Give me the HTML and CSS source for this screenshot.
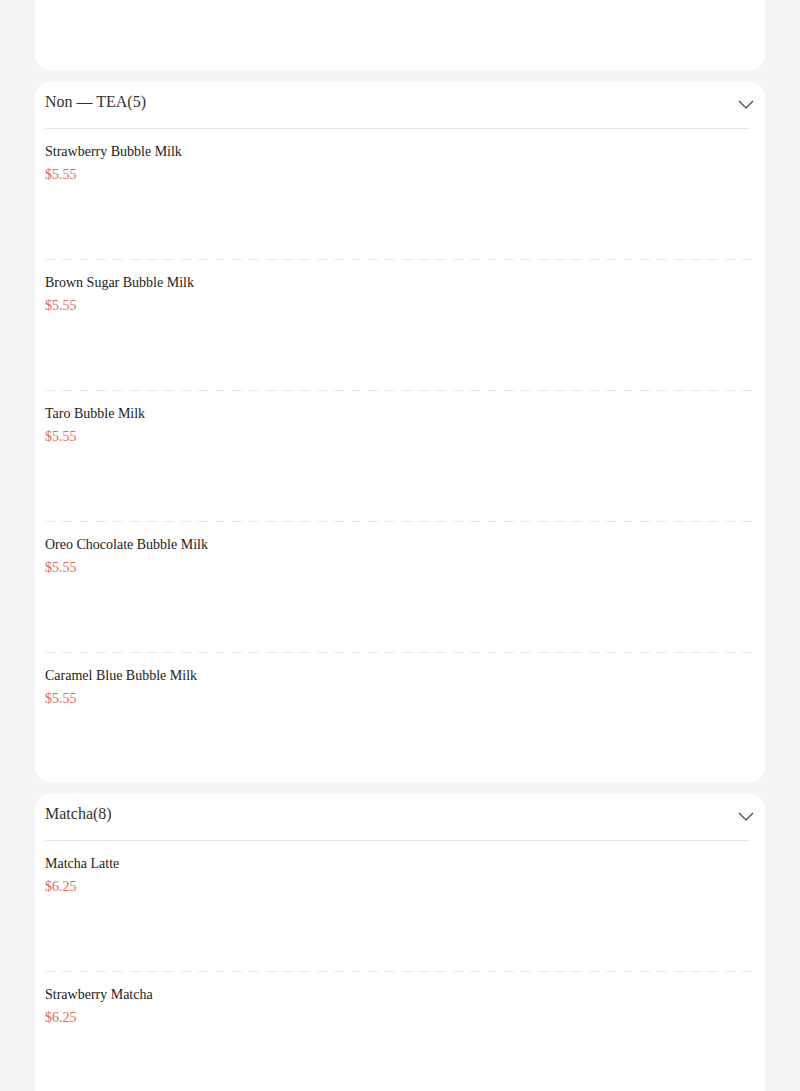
FILE: index.html
```html
<!DOCTYPE html>
<html>
<head>
<meta charset="utf-8">
<link rel="stylesheet" href="styles.css">
</head>
<body>
<div class="menu">
  <section class="card card-partial"></section>

  <section class="card">
    <div class="head">
      <span class="title">Non — TEA(5)</span>
      <svg class="chev" width="16" height="9" viewBox="0 0 16 9"><polyline points="1,1 8,8 15,1" fill="none" stroke="#444" stroke-width="1.2"/></svg>
    </div>
    <div class="item"><div class="name">Strawberry Bubble Milk</div><div class="price">$5.55</div></div>
    <div class="item"><div class="name">Brown Sugar Bubble Milk</div><div class="price">$5.55</div></div>
    <div class="item"><div class="name">Taro Bubble Milk</div><div class="price">$5.55</div></div>
    <div class="item"><div class="name">Oreo Chocolate Bubble Milk</div><div class="price">$5.55</div></div>
    <div class="item"><div class="name">Caramel Blue Bubble Milk</div><div class="price">$5.55</div></div>
  </section>

  <section class="card">
    <div class="head">
      <span class="title">Matcha(8)</span>
      <svg class="chev" width="16" height="9" viewBox="0 0 16 9"><polyline points="1,1 8,8 15,1" fill="none" stroke="#444" stroke-width="1.2"/></svg>
    </div>
    <div class="item"><div class="name">Matcha Latte</div><div class="price">$6.25</div></div>
    <div class="item"><div class="name">Strawberry Matcha</div><div class="price">$6.25</div></div>
  </section>
</div>
</body>
</html>
```
FILE: styles.css
```css
html, body {
  margin: 0;
  padding: 0;
  background: #f5f5f7;
  font-family: "Liberation Serif", "Times New Roman", serif;
  overflow: hidden;
  height: 1091px;
}
.menu {
  display: flex;
  flex-direction: column;
  gap: 10px;
  padding: 0 35px;
}
.card {
  background: #fff;
  border-radius: 16px;
  padding-left: 10px;
  overflow: hidden;
}
.card-partial {
  height: 71px;
  border-radius: 0 0 16px 16px;
}
.head {
  display: flex;
  align-items: center;
  justify-content: space-between;
  height: 47px;
  margin-right: 16px;
  border-bottom: 1px solid #e4e4e4;
}
.title {
  font-size: 16px;
  color: #333;
  line-height: 18px;
  margin-top: -5px;
}
.chev {
  margin-right: -5px;
  margin-top: -1px;
}
.item {
  box-sizing: border-box;
  padding-top: 13px;
  background-image: repeating-linear-gradient(90deg, #e6e6e6 0 10px, transparent 10px 17px);
  background-size: 100% 1px;
  background-repeat: no-repeat;
  background-position: left bottom;
  height: 131px;
  margin-right: 10px;
}
.item:last-child {
  background-image: none;
  height: 130px;
}
.name {
  font-size: 14px;
  line-height: 20px;
  color: #222;
}
.price {
  font-size: 14px;
  line-height: 20px;
  margin-top: 3px;
  color: #e0685a;
}
```
